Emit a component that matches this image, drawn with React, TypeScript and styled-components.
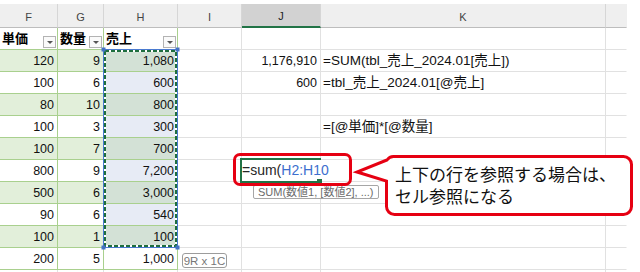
import React from 'react';
import styled, { createGlobalStyle } from 'styled-components';

const GlobalStyle = createGlobalStyle`
  html, body { margin: 0; padding: 0; background: #fff; }
  body {
    font-family: "Liberation Sans", "Noto Sans CJK JP", sans-serif;
    overflow: hidden;
  }
  * { box-sizing: border-box; }
`;

const RED = '#e60012';
const XL_GREEN = '#217346';

type Tone = 'grid' | 'head' | 'band' | 'plain' | 'selBand' | 'selPlain';

const toneBg: Record<Tone, string> = {
  grid: '#ffffff',
  head: '#ffffff',
  band: '#e2efda',
  plain: '#ffffff',
  selBand: '#d3e1d6',
  selPlain: '#e7ebf5',
};

const Sheet = styled.div`
  position: relative;
  width: 640px;
  height: 272px;
  overflow: hidden;
  padding-top: 4px;
  background: #fff;
`;

const Grid = styled.div`
  display: grid;
  grid-template-columns: 58px 46px 74px 64px 79px 285px 21px;
  grid-template-rows: 24px;
  grid-auto-rows: 22px;
  width: 627px;
`;

const ColHead = styled.div<{ $selected?: boolean; $edge?: boolean }>`
  display: flex;
  align-items: center;
  justify-content: center;
  padding-top: 2px;
  background: ${(p) => (p.$selected ? '#d2d2d2' : '#efefef')};
  border-right: 1px solid ${(p) => (p.$edge ? 'transparent' : '#d6d6d6')};
  border-bottom: ${(p) => (p.$selected ? `2px solid ${XL_GREEN}` : '1px solid #bdbdbd')};
  font-size: 11px;
  color: ${(p) => (p.$selected ? '#222' : '#444')};
`;

const Cell = styled.div<{ $tone?: Tone; $align?: 'left' | 'right'; $num?: boolean; $edge?: boolean }>`
  display: flex;
  align-items: flex-end;
  justify-content: ${(p) => (p.$align === 'right' ? 'flex-end' : 'flex-start')};
  padding: 0 3px 3px 2px;
  background: ${(p) => toneBg[p.$tone ?? 'grid']};
  border-right: 1px solid
    ${(p) => (p.$edge ? 'transparent' : p.$tone && p.$tone !== 'grid' ? '#a9d08e' : '#e1e1e1')};
  border-bottom: 1px solid ${(p) => (p.$tone && p.$tone !== 'grid' ? '#a9d08e' : '#e1e1e1')};
  font-size: ${(p) => (p.$num ? '12.5px' : '13.5px')};
  line-height: 14px;
  color: #111;
  white-space: nowrap;
`;

const HeadCell = styled(Cell)`
  align-items: center;
  justify-content: space-between;
  padding: 0 1px 0 2px;
  font-size: 13px;
  font-weight: bold;
  color: #000;
`;

const FilterButton = styled.span`
  align-self: flex-end;
  margin-bottom: 1px;
  width: 13px;
  height: 12px;
  border: 1px solid #b3b3b3;
  background: #fafafa;
  display: flex;
  align-items: center;
  justify-content: center;
  padding-top: 1px;
`;

const Caret = styled.span`
  width: 0;
  height: 0;
  border-left: 3px solid transparent;
  border-right: 3px solid transparent;
  border-top: 3px solid #555;
`;

const RangeFrame = styled.svg`
  position: absolute;
  left: 100px;
  top: 46px;
  overflow: visible;
`;

const Editor = styled.div`
  position: absolute;
  left: 242px;
  top: 160px;
  width: 108px;
  height: 21px;
  background: #fff;
  font-size: 14px;
  line-height: 21px;
  color: #262626;
  white-space: nowrap;
`;

const RefText = styled.span`
  color: #3d6fce;
`;

const ActiveCell = styled.div`
  position: absolute;
  left: 240px;
  top: 158px;
  width: 81px;
  height: 25px;
  border: 2px solid ${XL_GREEN};
  border-right: none;
`;

const FillHandle = styled.div`
  position: absolute;
  left: 317px;
  top: 179px;
  width: 5px;
  height: 5px;
  background: ${XL_GREEN};
`;

const Tooltip = styled.div`
  position: absolute;
  left: 253px;
  top: 185px;
  height: 14px;
  padding: 0 4px;
  border: 1px solid #a6a6a6;
  border-radius: 2px;
  background: #fff;
  font-size: 11px;
  line-height: 12px;
  color: #6b6b6b;
  white-space: nowrap;
`;

const RedBox = styled.div`
  position: absolute;
  left: 233px;
  top: 153px;
  width: 119px;
  height: 33px;
  border: 3px solid ${RED};
  border-radius: 7px;
`;

const CalloutShape = styled.svg`
  position: absolute;
  left: 350px;
  top: 150px;
  overflow: visible;
`;

const CalloutText = styled.div`
  position: absolute;
  left: 395px;
  top: 163px;
  display: flex;
  flex-direction: column;
  font-family: "Noto Sans CJK JP", sans-serif;
  font-size: 17px;
  color: #111;
  white-space: nowrap;
`;

const CalloutLine = styled.span`
  display: block;
  height: 22px;
  line-height: 22px;
`;

const SizeBadge = styled.div`
  position: absolute;
  left: 182px;
  top: 253px;
  width: 45px;
  height: 15px;
  display: flex;
  align-items: center;
  justify-content: center;
  border: 1px solid #9c9c9c;
  border-radius: 3px;
  background: #fff;
  font-size: 11.5px;
  color: #777;
  white-space: nowrap;
`;

type Row = { f: number; g: number; h: string; j?: string; k?: string };

const rows: Row[] = [
  { f: 120, g: 9, h: '1,080', j: '1,176,910', k: '=SUM(tbl_売上_2024.01[売上])' },
  { f: 100, g: 6, h: '600', j: '600', k: '=tbl_売上_2024.01[@売上]' },
  { f: 80, g: 10, h: '800' },
  { f: 100, g: 3, h: '300', k: '=[@単価]*[@数量]' },
  { f: 100, g: 7, h: '700' },
  { f: 800, g: 9, h: '7,200' },
  { f: 500, g: 6, h: '3,000' },
  { f: 90, g: 6, h: '540' },
  { f: 100, g: 1, h: '100' },
  { f: 200, g: 5, h: '1,000' },
];

const letters = ['F', 'G', 'H', 'I', 'J', 'K', ''];

export default function App() {
  return (
    <>
      <GlobalStyle />
      <Sheet>
        <Grid>
          {letters.map((l, i) => (
            <ColHead key={'c' + i} $selected={l === 'J'} $edge={i === 6}>
              {l}
            </ColHead>
          ))}

          {['単価', '数量', '売上'].map((h) => (
            <HeadCell key={h} $tone="head">
              <span>{h}</span>
              <FilterButton>
                <Caret />
              </FilterButton>
            </HeadCell>
          ))}
          <Cell />
          <Cell />
          <Cell />
          <Cell $edge />

          {rows.map((r, i) => {
            const band = i % 2 === 0;
            const inSel = i <= 8;
            const base: Tone = band ? 'band' : 'plain';
            const hTone: Tone = inSel ? (band ? 'selBand' : 'selPlain') : base;
            return (
              <React.Fragment key={'r' + i}>
                <Cell $tone={base} $align="right" $num>
                  {r.f}
                </Cell>
                <Cell $tone={base} $align="right" $num>
                  {r.g}
                </Cell>
                <Cell $tone={hTone} $align="right" $num>
                  {r.h}
                </Cell>
                <Cell />
                <Cell $align="right" $num>
                  {r.j}
                </Cell>
                <Cell>{r.k}</Cell>
                <Cell $edge />
              </React.Fragment>
            );
          })}

          {Array.from({ length: 7 }).map((_, i) => (
            <Cell key={'last' + i} $edge={i === 6} />
          ))}
        </Grid>

        <RangeFrame width={80} height={204}>
          <rect x={3.5} y={3.5} width={74} height={198} fill="none" stroke="#4a7ad0" strokeWidth={1} />
          <rect x={5} y={5} width={71} height={195} fill="none" stroke="#ffffff" strokeWidth={2} />
          <rect
            x={5}
            y={5}
            width={71}
            height={195}
            fill="none"
            stroke="#1e6e3e"
            strokeWidth={2}
            strokeDasharray="4 2"
          />
          <rect x={1.5} y={1.5} width={4} height={4} fill="#4472c4" />
          <rect x={75.5} y={1.5} width={4} height={4} fill="#4472c4" />
          <rect x={1.5} y={199.5} width={4} height={4} fill="#4472c4" />
          <rect x={75.5} y={199.5} width={4} height={4} fill="#4472c4" />
        </RangeFrame>

        <SizeBadge>9R x 1C</SizeBadge>

        <Tooltip>SUM(数値1, [数値2], ...)</Tooltip>

        <Editor>
          =sum(<RefText>H2:H10</RefText>
        </Editor>
        <ActiveCell />
        <FillHandle />

        <RedBox />

        <CalloutShape width={290} height={70}>
          <path
            d="M 44.5 6.5 H 273.5 A 8 8 0 0 1 281.5 14.5 V 56.5 A 8 8 0 0 1 273.5 64.5 H 44.5 A 8 8 0 0 1 36.5 56.5 V 31 L 7 22 L 37 10 A 8 8 0 0 1 44.5 6.5 Z"
            fill="#ffffff"
            stroke={RED}
            strokeWidth={3}
            strokeLinejoin="miter"
          />
        </CalloutShape>
        <CalloutText>
          <CalloutLine>上下の行を参照する場合は、</CalloutLine>
          <CalloutLine>セル参照になる</CalloutLine>
        </CalloutText>
      </Sheet>
    </>
  );
}
